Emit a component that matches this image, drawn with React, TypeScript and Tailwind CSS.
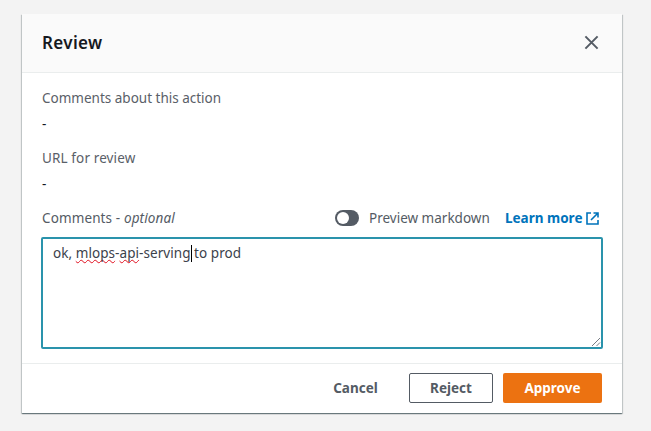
import React from "react";

function Misspelled({ children }: { children: string }) {
  return (
    <span className="underline decoration-[#e01020] decoration-wavy decoration-[1.2px] underline-offset-[1px] [text-decoration-skip-ink:none]">
      {children}
    </span>
  );
}

function Field({ label, className }: { label: string; className?: string }) {
  return (
    <div className="h-[60px]">
      <div className={`h-[22px] text-[#5a6068] ${className ?? ""}`}>{label}</div>
      <div className="pt-1 text-[#16191f]">-</div>
    </div>
  );
}

export default function App() {
  return (
    <div className="h-[431px] w-[651px] overflow-hidden bg-[#f3f3f3] px-[22px] pt-[14px] font-['Noto_Sans',sans-serif] text-[13.5px] leading-5">
      <div className="flex h-[399px] w-[600px] flex-col bg-white shadow-[0_1px_1px_0_rgba(0,28,36,0.4),1px_1px_1px_0_rgba(0,28,36,0.15),-1px_1px_1px_0_rgba(0,28,36,0.15)]">
        <header className="flex h-[59px] shrink-0 items-center justify-between border-b border-[#eaeded] bg-[#fafafa] pr-[23px] pl-5">
          <h1 className="text-[17px] font-semibold tracking-[0.35px] text-[#16191f]">Review</h1>
          <svg className="-mt-px" width="15" height="15" viewBox="0 0 15 15" fill="none" stroke="#545b64" strokeWidth="2">
            <path d="M1.4 1.4 13.6 13.6M13.6 1.4 1.4 13.6" />
          </svg>
        </header>
        <main className="flex-1 pt-[15px] pr-5 pl-5">
          <Field label="Comments about this action" />
          <Field label="URL for review" className="tracking-[0.12px]" />
          <div className="flex h-5 items-center text-[#545b64]">
            <span className="tracking-[0.12px]">Comments - <i>optional</i></span>
            <span className="ml-auto flex h-4 w-6 items-center rounded-full bg-[#545b64] px-[2px]">
              <span className="size-3 rounded-full bg-white" />
            </span>
            <span className="ml-[10px] w-[121px] whitespace-nowrap">Preview markdown</span>
            <a className="ml-[15px] flex w-[97px] items-center justify-between whitespace-nowrap pr-[3px] font-bold text-[#0073bb]">
              Learn more
              <svg width="13" height="13" viewBox="0 0 13 13" fill="none" stroke="#0073bb" strokeWidth="1.6">
                <path d="M5 1H1v11h11V8M7.5 1H12v4.5M12 1 5 8" />
              </svg>
            </a>
          </div>
          <div className="relative -ml-px mt-[9px] h-[112px] w-[562px] rounded-[2px] border-2 border-[#2a93ac] px-[10px] py-1 tracking-[0.06px] text-[#3b424b]">
            ok, <Misspelled>mlops</Misspelled>-<Misspelled>api</Misspelled>-serving
            <span className="-mr-px inline-block h-[17px] w-px bg-black align-[-4px]" /> to prod
            <svg className="absolute right-0 bottom-0" width="10" height="10" viewBox="0 0 10 10" stroke="#545b64" strokeWidth="0.8">
              <path d="M1 9 9 1M5.5 9 9 5.5" />
            </svg>
          </div>
        </main>
        <footer className="flex h-[50px] shrink-0 items-center justify-end border-t border-[#eaeded] pr-5 pb-px font-bold text-[#545b64]">
          <button className="mr-[31px] w-[45px] whitespace-nowrap">Cancel</button>
          <button className="mr-[10px] h-[30px] w-[84px] rounded-[2px] border border-[#545b64]">Reject</button>
          <button className="h-[30px] w-[99px] rounded-[2px] bg-[#ec7211] text-white">Approve</button>
        </footer>
      </div>
    </div>
  );
}
